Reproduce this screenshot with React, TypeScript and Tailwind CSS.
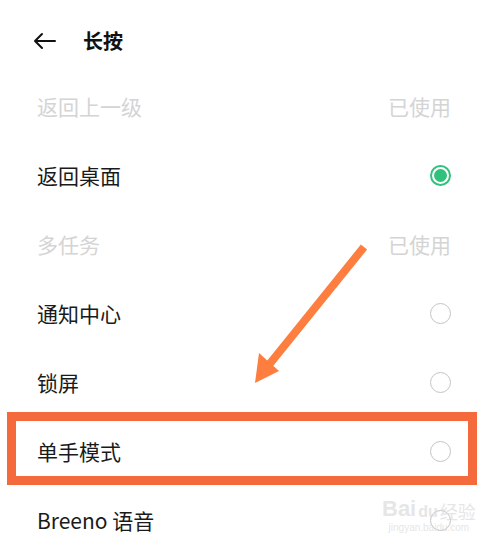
import React from "react";

const font = { fontFamily: '"Noto Sans CJK SC", "Noto Sans", sans-serif' };

type Row = { label: string; state: "used" | "checked" | "empty" };

const rows: Row[] = [
  { label: "返回上一级", state: "used" },
  { label: "返回桌面", state: "checked" },
  { label: "多任务", state: "used" },
  { label: "通知中心", state: "empty" },
  { label: "锁屏", state: "empty" },
  { label: "单手模式", state: "empty" },
  { label: "Breeno 语音", state: "empty" },
];

function Radio({ checked }: { checked: boolean }) {
  if (checked) {
    return (
      <div className="w-[21px] h-[21px] rounded-full border-[2px] border-[#2fc27c] flex items-center justify-center">
        <div className="w-[13px] h-[13px] rounded-full bg-[#2fc27c]" />
      </div>
    );
  }
  return <div className="w-[21px] h-[21px] rounded-full border-[1.5px] border-[#c4c4c4]" />;
}

export default function App() {
  return (
    <div className="relative w-[497px] h-[553px] bg-white overflow-hidden" style={font}>
      <div className="h-[72px] pt-[10px] flex items-center pl-[33px]">
        <svg width="24" height="18" viewBox="0 0 24 18" fill="none" stroke="#111" strokeWidth="2" strokeLinecap="round" strokeLinejoin="round">
          <path d="M22 9H2M9 2L2 9l7 7" />
        </svg>
        <span className="ml-[26px] text-[20px] font-bold text-[#111] leading-none">长按</span>
      </div>
      <div className="flex flex-col">
        {rows.map((r) => (
          <div key={r.label} className="h-[69px] flex items-center justify-between pl-[37px] pr-[46px]">
            <span className={`text-[21px] leading-none ${r.state === "used" ? "text-[#d4d4d4]" : "text-[#1a1a1a]"}`}>
              {r.label}
            </span>
            {r.state === "used" ? (
              <span className="text-[21px] leading-none text-[#d4d4d4]">已使用</span>
            ) : (
              <Radio checked={r.state === "checked"} />
            )}
          </div>
        ))}
      </div>

      {/* highlight box */}
      <div className="absolute left-[7px] top-[412px] w-[470px] h-[73px] border-[9px] border-[#f56a3c]" />

      {/* arrow */}
      <svg className="absolute left-0 top-0" width="497" height="553" viewBox="0 0 497 553">
        <line x1="364" y1="247" x2="268" y2="366" stroke="#fd7e3e" strokeWidth="8" strokeLinecap="butt" />
        <polygon points="255,383 259,353 279,371" fill="#fd7e3e" />
      </svg>

      {/* watermark */}
      <div className="absolute left-[382px] top-[498px] flex flex-col items-center leading-none opacity-60">
        <div className="flex items-end text-[#d6d6d6]">
          <span className="text-[22px] font-bold" style={{ fontFamily: '"Liberation Sans", sans-serif' }}>Bai</span>
          <span className="text-[16px] font-bold ml-[2px]" style={{ fontFamily: '"Liberation Sans", sans-serif' }}>du</span>
          <span className="text-[18px] ml-[2px]">经验</span>
        </div>
        <span className="text-[10px] text-[#d6d6d6] mt-[3px]" style={{ fontFamily: '"Liberation Sans", sans-serif' }}>jingyan.baidu.com</span>
      </div>
    </div>
  );
}
